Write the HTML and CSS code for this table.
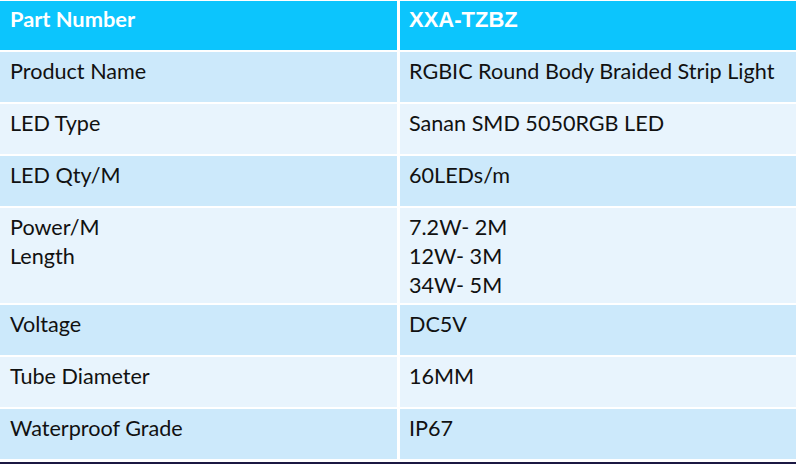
FILE: index.html
```html
<!DOCTYPE html>
<html>
<head>
<meta charset="utf-8">
<link rel="stylesheet" href="styles.css">
</head>
<body>
<div class="spec">
  <div class="cell head key">Part Number</div>
  <div class="cell head val code">XXA-TZBZ</div>

  <div class="cell dark">Product Name</div>
  <div class="cell dark val">RGBIC Round Body Braided Strip Light</div>

  <div class="cell light">LED Type</div>
  <div class="cell light val">Sanan SMD 5050RGB LED</div>

  <div class="cell dark">LED Qty/M</div>
  <div class="cell dark val">60LEDs/m</div>

  <div class="cell light tall">Power/M<br>Length</div>
  <div class="cell light tall val">7.2W- 2M<br>12W- 3M<br>34W- 5M</div>

  <div class="cell dark">Voltage</div>
  <div class="cell dark val">DC5V</div>

  <div class="cell light">Tube Diameter</div>
  <div class="cell light val">16MM</div>

  <div class="cell dark">Waterproof Grade</div>
  <div class="cell dark val">IP67</div>
</div>
<div class="baseline"></div>
</body>
</html>
```

FILE: styles.css
```css
html, body {
  margin: 0;
  padding: 0;
  background: #ffffff;
  width: 796px;
  height: 464px;
  overflow: hidden;
}

.spec {
  display: grid;
  grid-template-columns: 397px 396px;
  grid-template-rows: 49px 50px 50px 50px 95px 50px 50px 50px;
  column-gap: 3px;
  row-gap: 2px;
  padding-top: 1px;
  padding-bottom: 3px;
}

.cell {
  box-sizing: border-box;
  padding: 5px 0 0 10px;
  font-family: Lato, "Open Sans", sans-serif;
  font-size: 21.6px;
  line-height: 29px;
  color: #111111;
}

.val {
  padding-left: 9px;
}

.head {
  background: #0cc5fd;
  color: #ffffff;
  font-weight: bold;
  font-size: 21.8px;
  padding-top: 3px;
}

.code {
  font-family: "Liberation Sans", Arial, sans-serif;
  font-size: 22px;
  padding-top: 4px;
  padding-left: 9px;
}

.dark {
  background: #cce9fb;
}

.light {
  background: #e8f4fd;
}

.baseline {
  height: 3px;
  background: #1b1842;
}
```
